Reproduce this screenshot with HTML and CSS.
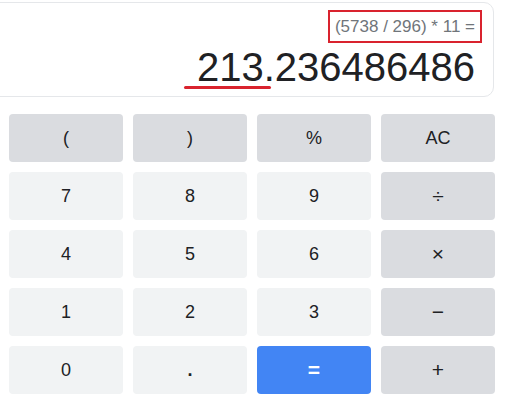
FILE: index.html
```html
<!DOCTYPE html>
<html lang="en">
<head>
	<meta charset="UTF-8">
	<title>Calculator</title>
	<link rel="stylesheet" href="styles.css">
</head>
<body>
	<div class="calc">
		<div class="display">
			<div class="expr">(5738 / 296) * 11 =</div>
			<div class="result">213.236486486</div>
			<span class="mark"></span>
		</div>
		<div class="keys">
			<button class="key fn">(</button>
			<button class="key fn">)</button>
			<button class="key fn">%</button>
			<button class="key fn">AC</button>
			<button class="key">7</button>
			<button class="key">8</button>
			<button class="key">9</button>
			<button class="key fn op">÷</button>
			<button class="key">4</button>
			<button class="key">5</button>
			<button class="key">6</button>
			<button class="key fn op">×</button>
			<button class="key">1</button>
			<button class="key">2</button>
			<button class="key">3</button>
			<button class="key fn op">−</button>
			<button class="key">0</button>
			<button class="key dot">.</button>
			<button class="key eq">=</button>
			<button class="key fn op">+</button>
		</div>
	</div>
</body>
</html>
```

FILE: styles.css
```css
html, body {
	margin: 0;
	background: #fff;
	overflow: hidden;
}

.calc {
	width: 516px;
	font-family: "Liberation Sans", Arial, sans-serif;
	color: #202124;
}

.display {
	position: relative;
	box-sizing: border-box;
	margin: 2px 0 0 -30px;
	width: 524px;
	height: 95px;
	border: 1px solid #e5e7ea;
	border-radius: 10px;
	padding: 7px 11px 0 0;
	display: flex;
	flex-direction: column;
	align-items: flex-end;
}

.expr {
	border: 2px solid #d9232e;
	padding: 0 5px;
	height: 29px;
	line-height: 30px;
	font-size: 17px;
	color: #70757a;
}

.result {
	margin: 4px 7px 0 0;
	font-size: 40px;
	line-height: 40px;
	color: #202124;
}

.mark {
	position: absolute;
	left: 213px;
	top: 83px;
	width: 87px;
	height: 3px;
	border-radius: 2px;
	background: #d9232e;
}

.keys {
	display: grid;
	grid-template-columns: repeat(4, 114px);
	grid-auto-rows: 48px;
	gap: 10px;
	padding: 17px 0 0 9px;
}

.key {
	border: 0;
	border-radius: 4px;
	background: #f1f3f4;
	font-family: inherit;
	font-size: 18px;
	color: #202124;
	padding: 0;
}

.key.fn {
	background: #dadce0;
}

.key.op {
	font-size: 21px;
}

.key.dot {
	font-weight: bold;
}

.key.eq {
	background: #4285f4;
	color: #fff;
	font-weight: bold;
	font-size: 21px;
}
```
